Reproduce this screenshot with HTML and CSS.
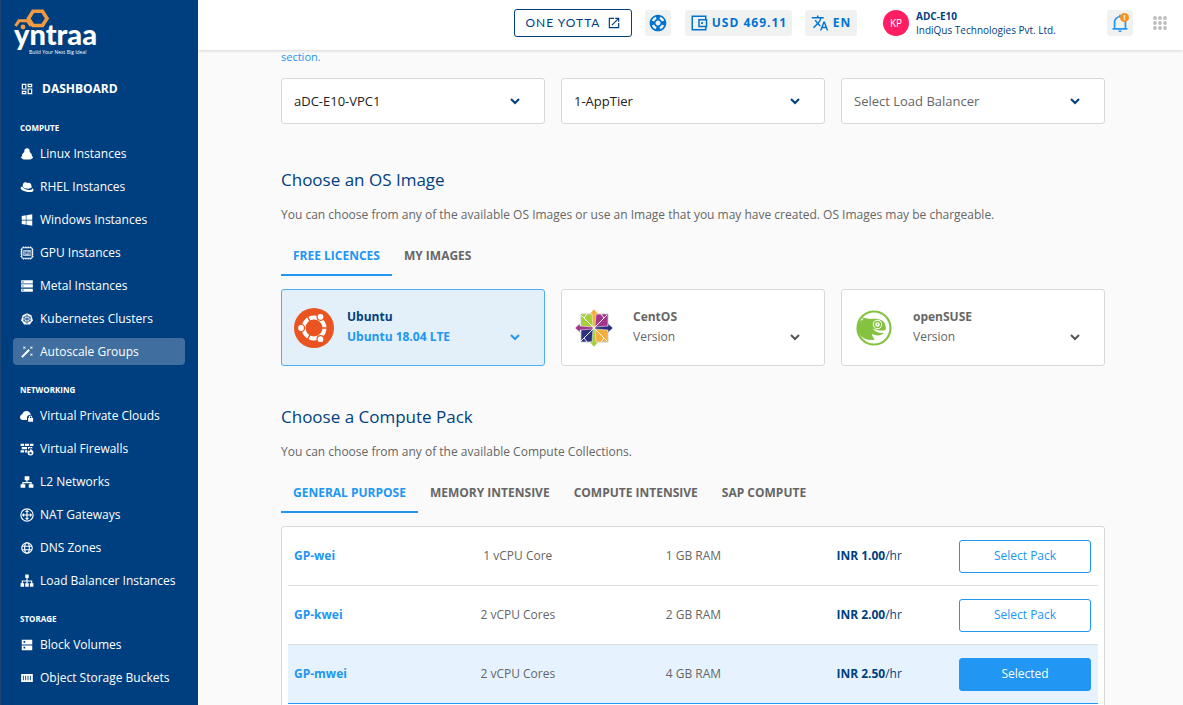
FILE: index.html
```html
<!DOCTYPE html>
<html lang="en">
<head>
<meta charset="utf-8">
<title>Autoscale Groups</title>
<link rel="stylesheet" href="styles.css">
</head>
<body>
<aside class="sidebar">
  <a class="logo" href="#" aria-label="yntraa home">
    <svg class="logo-mark" viewBox="0 0 90 52" aria-hidden="true">
      <path d="M20 3.300H29.500L34 10.500L29.500 17.500H20L15.500 10.500Z" fill="none" stroke="#f29a3f" stroke-width="3.600"/>
      <path d="M2.500 18L6 12.800H14.500L18 18" fill="none" stroke="#f29a3f" stroke-width="3"/>
      <circle cx="10" cy="19" r="2.400" fill="#f29a3f"/>
      <text class="logo-name" x="1" y="37">yntraa</text>
      <text class="logo-tag" x="16" y="46">Build Your Next Big Idea!</text>
    </svg>
  </a>
  <nav>
    <a class="nav-item nav-dashboard" href="#"><svg viewBox="0 0 24 24"><path d="M5 5h4v6H5zm10 8h4v6h-4zM15 5h4v2h-4zM5 17h4v2H5zM3 3v10h8V3zm10 0v6h8V3zm0 8v10h8V11zM3 15v6h8v-6z" fill-rule="evenodd"/></svg>DASHBOARD</a>
    <h2 class="nav-label">COMPUTE</h2>
    <div class="nav-group">
      <a class="nav-item" href="#"><svg viewBox="0 0 24 24"><path d="M12 2c-3 0-4.500 2-4.500 4.500 0 1-.2 2-1 3C4.500 11 3.500 13 3.500 15L1.500 18.500 6 21.500h12l4.500-3-2-3.500c0-2-1-4-3-5.500-.8-1-1-2-1-3C16.500 4 15 2 12 2z"/></svg>Linux Instances</a>
      <a class="nav-item" href="#"><svg viewBox="0 0 24 24"><path d="M5 12C4 8 6 4 9 4c2 0 2 1 4 1s3-1 5 1c1.500 1.500 2 5 2 7-3 3-12 2-15-1z"/><path d="M3.500 11C0 12 0 15 4 17.500c5 3 14 4 18 2 2-1.500 1.500-4-.8-5.500 0 5-14 3.500-17.700-3z"/></svg>RHEL Instances</a>
      <a class="nav-item" href="#"><svg viewBox="0 0 24 24"><path d="M3 5l7-1v7.500H3zm8-1.200L21 2v9.500H11zM3 12.700h7V20l-7-1zm8 0h10V22l-10-1.800z"/></svg>Windows Instances</a>
      <a class="nav-item" href="#"><svg viewBox="0 0 24 24"><rect x="3" y="3" width="18" height="18" rx="2" fill="none" stroke="#fff" stroke-width="2"/><path d="M6 1v2M10 1v2M14 1v2M18 1v2M6 21v2M10 21v2M14 21v2M18 21v2M1 6h2M1 10h2M1 14h2M1 18h2M21 6h2M21 10h2M21 14h2M21 18h2" stroke="#fff" stroke-width="2"/><path d="M5.500 7h13v10h-13z" opacity=".75"/><path d="M7 10h2v4H7m4 0v-4h2v2h-2m4-2v4h2v-4" fill="none" stroke="#003f7f" stroke-width="1"/></svg>GPU Instances</a>
      <a class="nav-item" href="#"><svg viewBox="0 0 24 24"><path fill-rule="evenodd" d="M2 2h20v5.500H2zM4 4v2h2V4zM2 9.200h20v5.500H2zM4 11v2h2v-2zM2 16.500h20V22H2zM4 18v2h2v-2z"/></svg>Metal Instances</a>
      <a class="nav-item" href="#"><svg viewBox="0 0 24 24"><path d="M12 2l7.500 3.500L22 14l-5 7.500H7L2 14l2.500-8.500z"/><g fill="none" stroke="#003f7f" stroke-width="1.200"><circle cx="12" cy="12" r="5.500"/><path d="M12 4v16M5 8.500l14 7M5 15.500l14-7"/></g></svg>Kubernetes Clusters</a>
      <a class="nav-item current" href="#" aria-current="page"><svg viewBox="0 0 24 24"><path d="M14.500 7l2.500 2.500L4.500 22 2 19.500zM7.500 5.600L10 7 8.600 4.500 10 2 7.500 3.400 5 2l1.400 2.500L5 7zm12 9.800L17 14l1.400 2.500L17 19l2.500-1.400L22 19l-1.400-2.500L22 14zM22 2l-2.500 1.400L17 2l1.400 2.500L17 7l2.500-1.400L22 7l-1.400-2.500z"/></svg>Autoscale Groups</a>
    </div>
    <h2 class="nav-label">NETWORKING</h2>
    <div class="nav-group">
      <a class="nav-item" href="#"><svg viewBox="0 0 24 24"><path d="M12 19H6C2.500 19 0 17 0 14c0-2.500 2-4.500 4-5 1-3.500 4-5.500 7-5.500 4 0 7 3 7.500 6.500C14 9.500 12 13 12 15z"/><path d="M14 15.500h1V14a3 3 0 0 1 6 0v1.500h1.500V22H14zm3 0h2.500V14a1.250 1.250 0 0 0-2.500 0z" fill-rule="evenodd"/></svg>Virtual Private Clouds</a>
      <a class="nav-item" href="#"><svg viewBox="0 0 24 24"><path d="M1 3h6v4H1zm7.500 0h7v4h-7zM17 3h6v4h-6zM3 8.500h9v4H3zm10.500 0H21v3l-3-2-4 3zM1 14h6v4H1zm7.500 0h4v4h-4z"/><path fill-rule="evenodd" d="M18 10c0 3 5 4 5 8a5 5 0 0 1-10 0c0-2 1-3 2-4l1 2c2-1 2-4 2-6zm0 7a2 2 0 1 0 .1 0z"/></svg>Virtual Firewalls</a>
      <a class="nav-item" href="#"><svg viewBox="0 0 24 24"><path d="M8 2h8v7h-3v3h7v4h3v6h-8v-6h3v-2H6v2h3v6H1v-6h3v-4h7V9H8z"/></svg>L2 Networks</a>
      <a class="nav-item" href="#"><svg viewBox="0 0 24 24"><circle cx="12" cy="12" r="10.500" fill="none" stroke="#fff" stroke-width="2"/><path d="M12 3l3.500 4H13v4h4V8.500l4 3.500-4 3.500V13h-4v4h2.500L12 21l-3.500-4H11v-4H7v2.500L3 12l4-3.500V11h4V7H8.500z"/></svg>NAT Gateways</a>
      <a class="nav-item" href="#"><svg viewBox="0 0 24 24"><g fill="none" stroke="#fff" stroke-width="2"><circle cx="12" cy="12" r="9"/><ellipse cx="12" cy="12" rx="4" ry="9"/><path d="M3.500 9h17M3.500 15h17"/></g></svg>DNS Zones</a>
      <a class="nav-item" href="#"><svg viewBox="0 0 24 24"><path d="M9 1h6v6h-2v4h8v5h2v6h-6v-6h2v-3h-6v3h2v6H9v-6h2v-3H5v3h2v6H1v-6h2v-5h8V7H9z"/></svg>Load Balancer Instances</a>
    </div>
    <h2 class="nav-label">STORAGE</h2>
    <div class="nav-group">
      <a class="nav-item" href="#"><svg viewBox="0 0 24 24"><path fill-rule="evenodd" d="M3 3h18v8H3zm3 2v3h3V5zM3 13h18v8H3zm3 2v3h3v-3z"/></svg>Block Volumes</a>
      <a class="nav-item" href="#"><svg viewBox="0 0 24 24"><path fill-rule="evenodd" d="M2 5h20v14H2zm3 3v8h1.500V8zm4 0v8h1.500V8zm4 0v8h1.500V8zm4 0v8h1.500V8z"/></svg>Object Storage Buckets</a>
    </div>
  </nav>
</aside>

<div class="page">
  <header class="topbar">
    <button class="yotta" type="button">ONE YOTTA <svg viewBox="0 0 24 24"><path d="M19 19H5V5h7V3H3v18h18v-9h-2zM14 3v2h3.600l-9.800 9.800 1.400 1.400L19 6.400V10h2V3z"/></svg></button>
    <button class="chip chip-icon" type="button" aria-label="Support"><svg viewBox="0 0 24 24"><path d="M12 2C6.480 2 2 6.480 2 12s4.480 10 10 10 10-4.480 10-10S17.520 2 12 2zm7.460 7.120l-2.780 1.150a4.982 4.982 0 0 0-2.950-2.940l1.150-2.780c2.100.800 3.770 2.470 4.580 4.570zM12 15c-1.660 0-3-1.340-3-3s1.340-3 3-3 3 1.340 3 3-1.340 3-3 3zM9.130 4.540l1.170 2.780a5 5 0 0 0-2.980 2.970L4.540 9.130a7.984 7.984 0 0 1 4.590-4.590zM4.540 14.870l2.780-1.150a4.968 4.968 0 0 0 2.970 2.960l-1.170 2.780a7.996 7.996 0 0 1-4.580-4.590zm10.340 4.590l-1.150-2.780a4.978 4.978 0 0 0 2.950-2.970l2.780 1.170a8.007 8.007 0 0 1-4.580 4.580z"/></svg></button>
    <button class="chip chip-balance" type="button"><svg viewBox="0 0 24 24"><path d="M21 7V3H3v18h18v-4M12 7.500h10v9H12z" fill="none" stroke="currentColor" stroke-width="2"/><circle cx="16" cy="12" r="1.500"/></svg>USD 469.11</button>
    <button class="chip chip-lang" type="button"><svg viewBox="0 0 24 24"><path d="M12.870 15.070l-2.540-2.510.030-.030A17.520 17.520 0 0 0 14.070 6H17V4h-7V2H8v2H1v2h11.170C11.500 7.920 10.440 9.750 9 11.350 8.070 10.320 7.300 9.190 6.690 8h-2c.73 1.630 1.730 3.170 2.980 4.560l-5.090 5.020L4 19l5-5 3.110 3.110zM18.500 10h-2L12 22h2l1.120-3h4.750L21 22h2zm-2.620 7l1.620-4.330L19.120 17z"/></svg>EN</button>
    <div class="account">
      <span class="avatar">KP</span>
      <span class="account-text"><strong>ADC-E10</strong><span>IndiQus Technologies Pvt. Ltd.</span></span>
    </div>
    <button class="chip chip-icon bell" type="button" aria-label="Notifications"><svg viewBox="0 0 24 24"><path d="M3 19h18M5.500 19V11a6.500 6.500 0 0 1 13 0v8M12 2v3" fill="none" stroke="currentColor" stroke-width="2"/><path d="M10 21h4a2 2 0 0 1-4 0z"/></svg><span class="badge">!</span></button>
    <button class="apps" type="button" aria-label="Apps"><svg viewBox="0 0 14 14"><g><circle cx="2" cy="2" r="1.900"/><circle cx="7" cy="2" r="1.900"/><circle cx="12" cy="2" r="1.900"/><circle cx="2" cy="7" r="1.900"/><circle cx="7" cy="7" r="1.900"/><circle cx="12" cy="7" r="1.900"/><circle cx="2" cy="12" r="1.900"/><circle cx="7" cy="12" r="1.900"/><circle cx="12" cy="12" r="1.900"/></g></svg></button>
  </header>

  <main class="content">
    <a class="section-link" href="#">section.</a>
    <div class="triple">
      <div class="field"><select aria-label="VPC"><option>aDC-E10-VPC1</option></select><svg class="chevron" viewBox="0 0 12 12"><path d="M2 4l4 4 4-4"/></svg></div>
      <div class="field"><select aria-label="Tier"><option>1-AppTier</option></select><svg class="chevron" viewBox="0 0 12 12"><path d="M2 4l4 4 4-4"/></svg></div>
      <div class="field"><select class="placeholder" aria-label="Load balancer"><option>Select Load Balancer</option></select><svg class="chevron" viewBox="0 0 12 12"><path d="M2 4l4 4 4-4"/></svg></div>
    </div>

    <section class="block block-os">
      <h1>Choose an OS Image</h1>
      <p>You can choose from any of the available OS Images or use an Image that you may have created. OS Images may be chargeable.</p>
      <div class="tabs" role="tablist">
        <button type="button" role="tab" aria-selected="true">FREE LICENCES</button>
        <button type="button" role="tab" aria-selected="false">MY IMAGES</button>
      </div>
      <div class="triple">
        <div class="os-card active">
          <svg class="os-logo" viewBox="0 0 40 40"><circle cx="20" cy="20" r="20" fill="#e95420"/><circle cx="20" cy="20" r="10.500" fill="none" stroke="#fff" stroke-width="4"/><path d="M20 20h15M20 20l-7.500-13M20 20l-7.500 13" stroke="#e95420" stroke-width="1.500"/><g fill="#fff" stroke="#e95420" stroke-width="1.200"><circle cx="7" cy="20" r="3.500"/><circle cx="26.500" cy="8.800" r="3.500"/><circle cx="26.500" cy="31.200" r="3.500"/></g></svg>
          <div class="os-text"><label for="ubuntu">Ubuntu</label><div class="version"><select id="ubuntu"><option>Ubuntu 18.04 LTE</option></select><svg class="chevron" viewBox="0 0 12 12"><path d="M2 4l4 4 4-4"/></svg></div></div>
        </div>
        <div class="os-card">
          <svg class="os-logo" viewBox="0 0 40 40"><g stroke="#c4c4c4" stroke-width=".8"><path d="M7 6h12.500v13.500H7z" fill="#a5cf3b"/><path d="M20.500 6H34v13.500H20.500z" fill="#a3358b"/><path d="M7 20.500h12.500V34H7z" fill="#2d2f7f"/><path d="M20.500 20.500H34V34H20.500z" fill="#f5ae3c"/></g><g fill="none" stroke="#fff" stroke-width=".9"><path d="M7 7l26 26M33 7L7 33M13 6l-3 4 10 10 10-10-3-4M13 34l-3-4 10-10 10 10-3 4"/></g><g stroke="#fff" stroke-width=".5"><path d="M20 1l4.500 5H22l-1 13h-2L18 6h-2.500z" fill="#f5ae3c"/><path d="M39 20l-5 4.500V22l-13-1v-2l13-1v-2.500z" fill="#2d2f7f"/><path d="M20 39l-4.500-5H18l1-13h2l1 13h2.500z" fill="#a5cf3b"/><path d="M1 20l5-4.500V18l13 1v2L6 22v2.500z" fill="#a3358b"/></g></svg>
          <div class="os-text"><label for="centos">CentOS</label><div class="version"><select id="centos"><option>Version</option></select><svg class="chevron" viewBox="0 0 12 12"><path d="M2 4l4 4 4-4"/></svg></div></div>
        </div>
        <div class="os-card">
          <svg class="os-logo" viewBox="0 0 40 40"><circle cx="20" cy="20" r="16.500" fill="#fff" stroke="#84c340" stroke-width="2.200"/><path d="M8 9.500q4 .5 8 1.500c8-1 13 1 14.500 4 1 3 2 5 1 7-4 1.500-9 0-13-1.500 3 3.500 7 5 11.500 4.500-3 3-8 3-12 1 0 2 1 3 2.500 5l-1 1C6 33 0 21 5 13l4-1z" fill="#84c340"/><circle cx="23.500" cy="16.500" r="4.700" fill="#fff"/><circle cx="23.500" cy="16.500" r="3" fill="none" stroke="#84c340" stroke-width="1.400"/><path d="M22.500 15.500h2l-1 2z" fill="#84c340"/></svg>
          <div class="os-text"><label for="suse">openSUSE</label><div class="version"><select id="suse"><option>Version</option></select><svg class="chevron" viewBox="0 0 12 12"><path d="M2 4l4 4 4-4"/></svg></div></div>
        </div>
      </div>
    </section>

    <section class="block block-pack">
      <h1>Choose a Compute Pack</h1>
      <p>You can choose from any of the available Compute Collections.</p>
      <div class="tabs" role="tablist">
        <button type="button" role="tab" aria-selected="true">GENERAL PURPOSE</button>
        <button type="button" role="tab" aria-selected="false">MEMORY INTENSIVE</button>
        <button type="button" role="tab" aria-selected="false">COMPUTE INTENSIVE</button>
        <button type="button" role="tab" aria-selected="false">SAP COMPUTE</button>
      </div>
      <div class="pack-box">
        <table class="packs">
          <tbody>
            <tr><th scope="row">GP-wei</th><td>1 vCPU Core</td><td>1 GB RAM</td><td class="price"><strong>INR 1.00</strong>/hr</td><td class="action"><button type="button">Select Pack</button></td></tr>
            <tr><th scope="row">GP-kwei</th><td>2 vCPU Cores</td><td>2 GB RAM</td><td class="price"><strong>INR 2.00</strong>/hr</td><td class="action"><button type="button">Select Pack</button></td></tr>
            <tr class="selected"><th scope="row">GP-mwei</th><td>2 vCPU Cores</td><td>4 GB RAM</td><td class="price"><strong>INR 2.50</strong>/hr</td><td class="action"><button type="button">Selected</button></td></tr>
          </tbody>
        </table>
      </div>
    </section>
  </main>
</div>
</body>
</html>
```
FILE: styles.css
```css
:root {
  --navy: #003f7f;
  --blue: #2196f3;
  --grey: #666;
  --line: #d8d8d8;
}

* { box-sizing: border-box; }

body {
  margin: 0;
  height: 100vh;
  overflow: hidden;
  display: grid;
  grid-template-columns: 198px 1fr;
  background: #fafafa;
  color: var(--grey);
  font: 12px/18px "Open Sans", sans-serif;
}

button, select { font: inherit; color: inherit; margin: 0; }
button { cursor: pointer; padding: 0; border: 0; background: none; }
a { text-decoration: none; }

/* Sidebar */
.sidebar {
  background: var(--navy);
  border-left: 1px solid #1f4470;
  padding: 8px 13px 0 12px;
  overflow: hidden;
}
.logo { display: block; height: 67px; }
.logo-mark { display: block; width: 90px; height: 52px; }
.logo-name { font: 900 29px "Lato", sans-serif; fill: #fff; }
.logo-tag { font: 5px "Open Sans", sans-serif; fill: #fff; }
.nav-group { display: grid; gap: 6px; }
.nav-item {
  display: flex;
  align-items: center;
  gap: 6px;
  height: 27px;
  padding-left: 7px;
  border-radius: 4px;
  color: #fff;
  white-space: nowrap;
}
.nav-item svg { width: 14px; height: 14px; flex: none; fill: #fff; }
.nav-item.current { background: #406f9f; }
.nav-dashboard { margin-bottom: 20px; font-weight: 700; gap: 8px; }
.nav-label {
  margin: 19px 0 6px 7px;
  font-size: 8px;
  line-height: 12px;
  font-weight: 700;
  color: #fff;
}

/* Top bar */
.page { display: flex; flex-direction: column; min-width: 0; overflow: hidden; }
.topbar {
  flex: none;
  display: flex;
  align-items: center;
  justify-content: flex-end;
  gap: 13px;
  height: 50px;
  padding: 0 16px 4px 0;
  background: #fff;
  box-shadow: 0 1px 3px rgba(0, 0, 0, .14);
  position: relative;
}
.topbar svg { fill: currentColor; }
.yotta {
  display: flex;
  align-items: center;
  justify-content: center;
  gap: 6px;
  width: 118px;
  height: 28px;
  border: 1px solid var(--navy);
  border-radius: 3px;
  color: var(--navy);
  font-family: Lato, sans-serif;
  letter-spacing: 1px;
}
.yotta svg { width: 14px; height: 14px; }
.chip {
  display: flex;
  align-items: center;
  justify-content: center;
  gap: 4px;
  height: 26px;
  border-radius: 3px;
  background: #f0f2f2;
  color: #0073cf;
  font-weight: 700;
  letter-spacing: 1px;
}
.chip svg { width: 18px; height: 18px; }
.chip-icon { width: 26px; }
.chip-icon svg { width: 20px; height: 20px; }
.chip-balance { width: 107px; margin-left: 1px; }
.chip-lang { width: 52px; }
.account {
  display: flex;
  align-items: center;
  gap: 7px;
  width: 211px;
  margin-left: 13px;
  color: var(--navy);
  font-size: 10px;
  line-height: 14px;
}
.account-text { display: grid; white-space: nowrap; }
.avatar {
  width: 26px;
  height: 26px;
  border-radius: 50%;
  background: #ff1d63;
  color: #fff;
  line-height: 26px;
  text-align: center;
}
.chip.bell { position: relative; color: var(--blue); }
.badge {
  position: absolute;
  top: 3px;
  right: 4px;
  width: 9px;
  height: 9px;
  border-radius: 50%;
  background: #f7931e;
  color: #fff;
  font-size: 7px;
  line-height: 9px;
  letter-spacing: 0;
}
.apps { width: 14px; height: 14px; margin-left: 7px; color: #bdbdbd; }
.apps svg { display: block; }

/* Form */
.content { padding: 0 78px 0 83px; }
.section-link { display: block; height: 28px; line-height: 14px; color: var(--blue); font-size: 11px; }
.triple { display: grid; grid-template-columns: repeat(3, 1fr); gap: 16px; }
.field, .version { display: grid; align-items: center; position: relative; }
.field select, .version select { appearance: none; width: 100%; background: none; outline: 0; }
.field select {
  height: 46px;
  padding: 0 12px;
  border: 1px solid var(--line);
  border-radius: 3px;
  background: #fff;
  color: #222;
  font-size: 13px;
}
.field select.placeholder { color: var(--grey); }
.chevron {
  position: absolute;
  right: 24px;
  width: 12px;
  height: 12px;
  fill: none;
  stroke: var(--navy);
  stroke-width: 2;
  pointer-events: none;
}
.block-os { margin-top: 44px; }
.block-pack { margin-top: 39px; }
.block h1 { margin: 0 0 14px; font-size: 17px; line-height: 24px; font-weight: 400; color: var(--navy); }
.block p { margin: 0 0 12px; }
.tabs { display: flex; margin-bottom: 13px; }
.tabs button {
  height: 40px;
  padding: 2px 12px 0;
  border-bottom: 2px solid transparent;
  font-weight: 700;
}
.tabs button[aria-selected="true"] { color: var(--blue); border-color: var(--blue); }

.os-card {
  display: flex;
  align-items: center;
  gap: 19px;
  height: 77px;
  padding-left: 12px;
  border: 1px solid var(--line);
  border-radius: 3px;
  background: #fff;
}
.os-logo { flex: none; width: 40px; height: 40px; }
.os-text { flex: 1; display: grid; gap: 2px; padding-bottom: 2px; }
.os-text label { font-weight: 700; }
.version select { height: 18px; padding: 0; border: 0; }
.os-card .chevron { right: 23px; stroke: #555; }
.os-card.active { gap: 13px; background: #e3eff9; border-color: #4facf5; }
.os-card.active label { color: var(--navy); }
.os-card.active select { color: var(--blue); font-weight: 700; }
.os-card.active .chevron { stroke: var(--blue); }

/* Compute packs */
.pack-box { padding: 0 6px 6px; border: 1px solid var(--line); border-radius: 3px; background: #fff; }
.packs { width: 100%; table-layout: fixed; border-collapse: separate; border-spacing: 0; }
.packs th, .packs td { height: 59px; padding: 0; text-align: center; border-bottom: 1px solid #dcdfe3; }
.packs th { width: 142px; padding-left: 6px; text-align: left; color: var(--blue); font-weight: 700; }
.packs .price { color: var(--navy); }
.packs .action { width: 141px; padding-right: 7px; text-align: right; }
.packs button {
  width: 132px;
  height: 33px;
  border: 1px solid var(--blue);
  border-radius: 3px;
  color: var(--blue);
}
.packs .selected { background: #e6f3fe; }
.packs .selected th, .packs .selected td { border-color: var(--blue); }
.packs .selected button { background: var(--blue); color: #fff; }
```
